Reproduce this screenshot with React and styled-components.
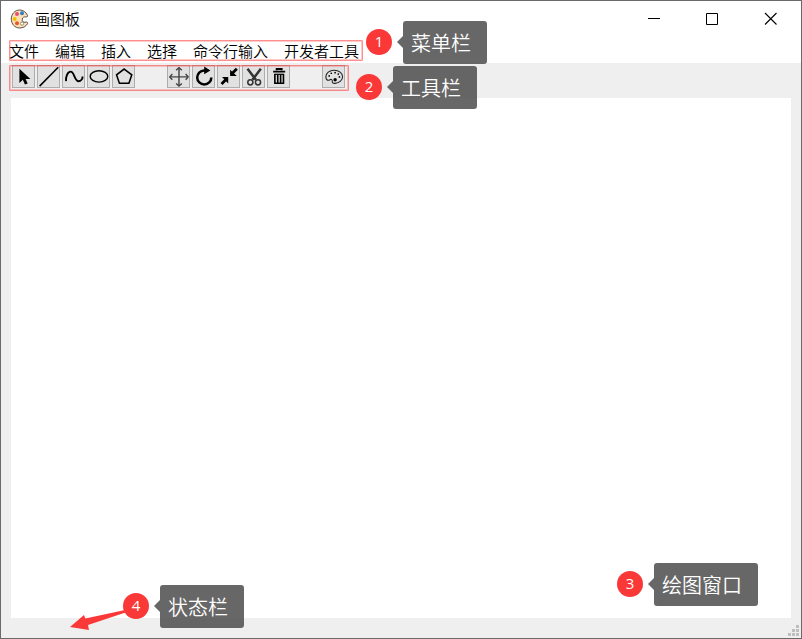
import React from 'react';
import styled, { createGlobalStyle } from 'styled-components';

const GlobalStyle = createGlobalStyle`
  * { box-sizing: border-box; }
  body { margin: 0; font-family: "Noto Sans CJK SC", sans-serif; overflow: hidden; }
  svg { display: block; }
`;

const Window = styled.div`
  position: relative;
  display: flex;
  flex-direction: column;
  width: 802px;
  height: 639px;
  border: 1px solid #6b696b;
  background: #efefef;
  color: #000;
`;

const TitleBar = styled.header`
  display: flex;
  align-items: center;
  height: 39px;
  padding: 0 24px 3px 9px;
  background: #fff;
`;

const Title = styled.h1`
  flex: 1;
  margin: 0 0 0 5px;
  font-size: 15px;
  font-weight: 350;
  line-height: 20px;
`;

const WindowControls = styled.div`
  display: flex;
  gap: 44px;
`;

const MenuBar = styled.nav`
  display: flex;
  height: 23px;
  padding-left: 8px;
  background: #fff;
`;

const Frame = styled.div`
  position: relative;
  display: flex;
  &::after {
    content: "";
    position: absolute;
    inset: 0;
    border: 1px solid rgba(251, 70, 66, 0.6);
    border-radius: 1px;
    box-shadow: inset 0 0 0 1px rgba(251, 70, 66, 0.28);
    pointer-events: none;
  }
`;

const MenuFrame = styled(Frame)`
  gap: 16px;
  width: 354px;
  height: 21px;
`;

const MenuItem = styled.span`
  font-size: 15px;
  font-weight: 350;
  line-height: 22px;
  white-space: nowrap;
`;

const ToolBar = styled.div`
  height: 35px;
  padding: 2px 0 0 8px;
`;

const ToolFrame = styled(Frame)`
  gap: 2px;
  width: 340px;
  height: 26px;
  padding-left: 3px;
`;

const ToolButton = styled.button`
  flex: none;
  width: 23px;
  height: 23px;
  margin-left: ${({ $space }) => $space || 0}px;
  padding: 0;
  border: 1px solid #adadad;
  background: #e1e1e1;
`;

const Canvas = styled.main`
  width: 780px;
  height: 520px;
  margin-left: 10px;
  background: #fff;
`;

const StatusBar = styled.footer`
  display: flex;
  flex: 1;
  align-items: flex-end;
  justify-content: flex-end;
  padding: 0 2px 2px 0;
`;

const Annotation = styled.div`
  position: absolute;
  left: ${({ $x }) => $x}px;
  top: ${({ $y }) => $y}px;
  display: flex;
  align-items: center;
  gap: 11px;
`;

const Badge = styled.span`
  width: 26px;
  height: 26px;
  margin-bottom: 1px;
  border-radius: 50%;
  background: #fb3838;
  color: #fff;
  font: 15px/24px "Open Sans", sans-serif;
  text-align: center;
`;

const Callout = styled.span`
  position: relative;
  width: ${({ $w }) => $w}px;
  height: 43px;
  padding-left: 8px;
  border-radius: 3px;
  background: rgba(80, 80, 80, 0.87);
  color: #fff;
  font-size: 20px;
  font-weight: 350;
  line-height: 43px;
  white-space: nowrap;
  &::before {
    content: "";
    position: absolute;
    left: -6px;
    top: 15px;
    border: 6px solid transparent;
    border-left: 0;
    border-right-color: rgba(80, 80, 80, 0.87);
  }
`;

const Pointer = styled.svg`
  position: absolute;
  left: 68px;
  top: 607px;
`;

const line = { fill: 'none', stroke: '#000', strokeWidth: 2 };

const icons = {
  select: <path d="M6 2.5v14.8l3.6-3.2 2.2 5 2.9-1.2-2.2-4.8h5z" fill="#000" />,
  line: <path d="M1 20.7 20.5 1" {...line} strokeWidth="1.6" />,
  curve: <path d="M2.5 15.5C2 11 4 5.5 7.3 5.5c4 0 4 10 8.3 10 2.5 0 4.2-2.6 4.2-5" {...line} />,
  ellipse: <ellipse cx="10.8" cy="10.5" rx="9.2" ry="6" {...line} strokeWidth="1.5" />,
  polygon: <path d="m11 2.8 8 6-3 8.9H6L3 8.8z" {...line} strokeWidth="1.6" />,
  move: (
    <g fill="none" stroke="#444" strokeWidth="1.5">
      <path d="M10.8 1.5v19M1.3 11h19" />
      <path d="m7.8 4 3-2.6 3 2.6M7.8 18l3 2.6 3-2.6M3.8 8l-2.6 3 2.6 3M17.8 8l2.6 3-2.6 3" />
    </g>
  ),
  rotate: (
    <g>
      <path d="M12 4.2H11a7.4 7.4 0 1 0 7.5 7.4" {...line} strokeWidth="2.6" />
      <path d="m11 0 6.5 4.2L11 8.3z" />
    </g>
  ),
  shrink: (
    <g>
      <path d="m3 18.5 6-6M19 2.5l-6 6" {...line} strokeWidth="3" />
      <path d="M3.5 11.2H10V18zM12 3.5v6.7h7z" />
    </g>
  ),
  cut: (
    <g fill="none" stroke="#333">
      <path d="m4 2.5 8.8 11.5M18 2.5 9.2 14" strokeWidth="2.6" />
      <circle cx="7" cy="16.7" r="2.7" strokeWidth="1.6" />
      <circle cx="15" cy="16.7" r="2.7" strokeWidth="1.6" />
    </g>
  ),
  remove: (
    <g {...line}>
      <path d="M4.7 5.5h12.6M8.4 4V2.8h5.2V4" />
      <path d="M6.5 8v9.7h9V8M9.5 9v8M12.5 9v8" strokeWidth="1.7" />
      <path d="M6 8.3h10" strokeWidth="1.3" />
    </g>
  ),
  palette: (
    <g>
      <path d="M11 4C6 4 2.3 7 2.3 10.8c0 3 1.7 4.5 3.8 3.4 2-1.2 3.2-.2 2.9 1.5-.3 1.8 1.2 2.3 3 2.1 4.5-.4 7.8-3.3 7.8-7S16 4 11 4z" fill="none" stroke="#222" strokeWidth="1.15" />
      <circle cx="12" cy="14" r="1.8" />
      <circle cx="5.8" cy="10" r=".9" /><circle cx="8" cy="7.2" r=".9" />
      <circle cx="12" cy="6.6" r=".9" /><circle cx="15.3" cy="8" r=".9" /><circle cx="16.5" cy="11" r=".9" />
    </g>
  ),
};

const tools = [
  ['select'], ['line'], ['curve'], ['ellipse'], ['polygon'],
  ['move', 30], ['rotate'], ['shrink'], ['cut'], ['remove'], ['palette', 30],
];

const menus = ['文件', '编辑', '插入', '选择', '命令行输入', '开发者工具'];

const annotations = [
  { n: 1, x: 366, y: 21, w: 84, text: '菜单栏' },
  { n: 2, x: 356, y: 66, w: 84, text: '工具栏' },
  { n: 3, x: 617, y: 563, w: 104, text: '绘图窗口' },
  { n: 4, x: 123, y: 585, w: 84, text: '状态栏' },
];

const AppIcon = () => (
  <svg width="20" height="20" viewBox="0 0 20 20">
    <path d="M17.5 6.3C16 3 13 1 9.7 1 4.8 1 1.3 5 1.3 10s3.5 9 8.4 9c3.3 0 6.3-1.6 7.8-4.3.5-1.1-.4-2-1.6-1.6-3 .9-4-.9-3.6-3 .3-1.7 1.8-2.5 3.6-2.2 1.3.2 2-.5 1.6-1.6z" fill="#fbe0b5" stroke="#5d504b" />
    <circle cx="7" cy="5" r="2" fill="#e94a78" />
    <circle cx="12" cy="4.3" r="2" fill="#2d83c6" />
    <circle cx="4.7" cy="10" r="2" fill="#f2bd00" />
    <circle cx="7" cy="14.2" r="2" fill="#e75a24" />
    <circle cx="12" cy="14.6" r="1.6" fill="#fff" stroke="#7b6b61" strokeWidth=".7" />
  </svg>
);

export default function App() {
  return (
    <>
      <GlobalStyle />
      <Window>
        <TitleBar>
          <AppIcon />
          <Title>画图板</Title>
          <WindowControls>
            <svg width="14" height="14" fill="none" stroke="#000"><path d="M1 6.5h12" /></svg>
            <svg width="14" height="14" fill="none" stroke="#000"><path d="M1.5 1.5h11v11h-11z" /></svg>
            <svg width="14" height="14" fill="none" stroke="#000" strokeWidth="1.1"><path d="m2 1 11.5 11.5M13.5 1 2 12.5" /></svg>
          </WindowControls>
        </TitleBar>
        <MenuBar>
          <MenuFrame>{menus.map((name) => <MenuItem key={name}>{name}</MenuItem>)}</MenuFrame>
        </MenuBar>
        <ToolBar>
          <ToolFrame>
            {tools.map(([name, space]) => (
              <ToolButton key={name} $space={space} aria-label={name}>
                <svg width="21" height="21" viewBox="-0.7 -0.4 22 22">{icons[name]}</svg>
              </ToolButton>
            ))}
          </ToolFrame>
        </ToolBar>
        <Canvas />
        <StatusBar>
          <svg width="11" height="11" fill="#bfbfbf">
            <path d="M8 0h3v3H8zM4 4h3v3H4zM8 4h3v3H8zM0 8h3v3H0zM4 8h3v3H4zM8 8h3v3H8z" />
          </svg>
        </StatusBar>
        <Pointer width="60" height="26" viewBox="69 608 60 26">
          <path d="m70 627 14-12 1.3 3.5L125 610l2 2-39 13 1 5z" fill="#fb3838" />
        </Pointer>
        {annotations.map(({ n, x, y, w, text }) => (
          <Annotation key={n} $x={x - 1} $y={y - 1}>
            <Badge>{n}</Badge>
            <Callout $w={w}>{text}</Callout>
          </Annotation>
        ))}
      </Window>
    </>
  );
}
